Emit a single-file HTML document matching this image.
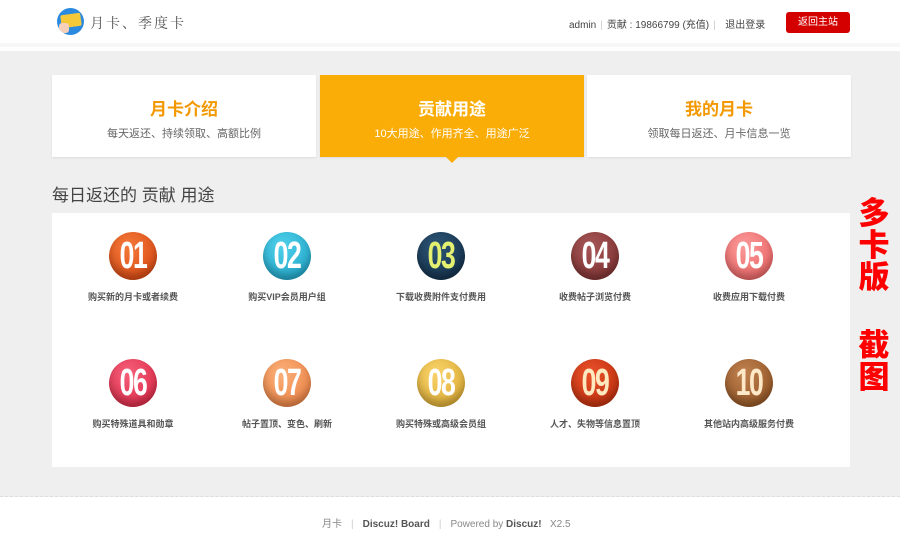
<!DOCTYPE html>
<html><head><meta charset="utf-8"><style>
*{margin:0;padding:0;box-sizing:border-box}
body{width:900px;height:543px;overflow:hidden;background:#fff;font-family:"Liberation Sans","Noto Sans CJK SC",sans-serif;position:relative}
.hdr{position:absolute;left:0;top:0;width:900px;height:47px;background:#fff;border-bottom:4px solid #f7f7f7}
.logo{position:absolute;left:57px;top:8px;width:27px;height:27px;border-radius:50%;background:#2a8ae0;overflow:hidden}
.logo i{position:absolute;left:4px;top:6px;width:20px;height:13px;background:#f3c93a;border-radius:2px;transform:rotate(-8deg)}
.logo b{position:absolute;left:2px;top:15px;width:10px;height:10px;background:#f6d0b8;border-radius:3px}
.title{position:absolute;left:90px;top:13px;font-size:14px;color:#555;letter-spacing:2px;font-family:"Noto Serif CJK SC",serif}
.user{position:absolute;left:569px;top:16px;font-size:10px;color:#444}
.user span{color:#ccc;margin:0 4px}
.btn{position:absolute;left:786px;top:12px;width:64px;height:21px;background:#d40000;border-radius:3px;color:#fff;font-size:10px;text-align:center;line-height:21px}
.gray{position:absolute;left:0;top:51px;width:900px;height:446px;background:#efefef;border-bottom:1px dashed #ddd}
.tab{position:absolute;top:75px;height:82px;width:264px;background:#fff;text-align:center;box-shadow:0 1px 2px rgba(0,0,0,.08)}
.tab h3{margin-top:20px;font-size:17px;color:#f39800;font-weight:bold}
.tab p{margin-top:5px;font-size:11px;color:#666}
.tab.on{background:#fbad07}
.tab.on h3,.tab.on p{color:#fff}
.arr{position:absolute;left:446px;top:157px;border:6px solid transparent;border-top-color:#fbad07;border-bottom:0}
.h2{position:absolute;left:52px;top:181px;font-size:17px;color:#444}
.panel{position:absolute;left:52px;top:213px;width:798px;height:254px;background:#fff}
.it{position:absolute;width:150px;text-align:center}
.ic{width:48px;height:48px;border-radius:50%;margin:0 auto;color:#fff;box-shadow:inset 0 -6px 8px rgba(0,0,0,.25);overflow:hidden}
.ic span{display:block;font-size:38px;font-weight:bold;line-height:48px;letter-spacing:-2px;font-family:"Liberation Sans Narrow","Liberation Sans",sans-serif;transform:scaleX(0.7)}
.lb{margin-top:10px;font-size:9px;color:#555;font-weight:bold}
.red{position:absolute;left:857px;font-size:31px;font-weight:900;color:#f00;line-height:32px;width:34px;text-align:center}
.foot{position:absolute;top:515px;left:322px;font-size:10px;color:#888}
.foot b{color:#555}
.foot span{color:#ccc;margin:0 9px}
</style></head><body>
<div class="hdr"><div class="logo"><i></i><b></b></div><div class="title">月卡、季度卡</div>
<div class="user">admin<span>|</span>贡献 : 19866799 (充值)<span>|</span>&nbsp;&nbsp;退出登录</div>
<div class="btn">返回主站</div></div>
<div class="gray"></div>
<div class="tab" style="left:52px"><h3>月卡介绍</h3><p>每天返还、持续领取、高额比例</p></div>
<div class="tab on" style="left:320px"><h3>贡献用途</h3><p>10大用途、作用齐全、用途广泛</p></div>
<div class="tab" style="left:587px"><h3>我的月卡</h3><p>领取每日返还、月卡信息一览</p></div>
<div class="arr"></div>
<div class="h2">每日返还的 贡献 用途</div>
<div class="panel">
<div class="it" style="left:6px;top:19px"><div class="ic" style="background:radial-gradient(circle at 40% 30%,#f47a3a,#d4400c)"><span>01</span></div><div class="lb">购买新的月卡或者续费</div></div>
<div class="it" style="left:160px;top:19px"><div class="ic" style="background:radial-gradient(circle at 40% 30%,#4fd0ea,#1a9fc4)"><span>02</span></div><div class="lb">购买VIP会员用户组</div></div>
<div class="it" style="left:314px;top:19px"><div class="ic" style="background:radial-gradient(circle at 40% 30%,#2d5575,#0f2a44);color:#e4f070"><span>03</span></div><div class="lb">下载收费附件支付费用</div></div>
<div class="it" style="left:468px;top:19px"><div class="ic" style="background:radial-gradient(circle at 40% 30%,#a65656,#7a2c2c)"><span>04</span></div><div class="lb">收费帖子浏览付费</div></div>
<div class="it" style="left:622px;top:19px"><div class="ic" style="background:radial-gradient(circle at 40% 30%,#fb9a9a,#e85a5a)"><span>05</span></div><div class="lb">收费应用下载付费</div></div>
<div class="it" style="left:6px;top:146px"><div class="ic" style="background:radial-gradient(circle at 40% 30%,#f5607a,#d8203e)"><span>06</span></div><div class="lb">购买特殊道具和勋章</div></div>
<div class="it" style="left:160px;top:146px"><div class="ic" style="background:radial-gradient(circle at 40% 30%,#fbb07a,#e87a3a)"><span>07</span></div><div class="lb">帖子置顶、变色、刷新</div></div>
<div class="it" style="left:314px;top:146px"><div class="ic" style="background:radial-gradient(circle at 40% 30%,#f8d36a,#d8a42a)"><span>08</span></div><div class="lb">购买特殊或高级会员组</div></div>
<div class="it" style="left:468px;top:146px"><div class="ic" style="background:radial-gradient(circle at 40% 30%,#e8502a,#b82a08);color:#fde8c0"><span>09</span></div><div class="lb">人才、失物等信息置顶</div></div>
<div class="it" style="left:622px;top:146px"><div class="ic" style="background:radial-gradient(circle at 40% 30%,#c08050,#8a4e1c);color:#fde8c8"><span>10</span></div><div class="lb">其他站内高级服务付费</div></div>
</div>
<div class="red" style="top:198px">多<br>卡<br>版</div>
<div class="red" style="top:330px">截<br>图</div>
<div class="foot">月卡<span>|</span><b>Discuz! Board</b><span>|</span>Powered by <b>Discuz!</b>&nbsp;&nbsp;&nbsp;X2.5</div>
</body></html>
